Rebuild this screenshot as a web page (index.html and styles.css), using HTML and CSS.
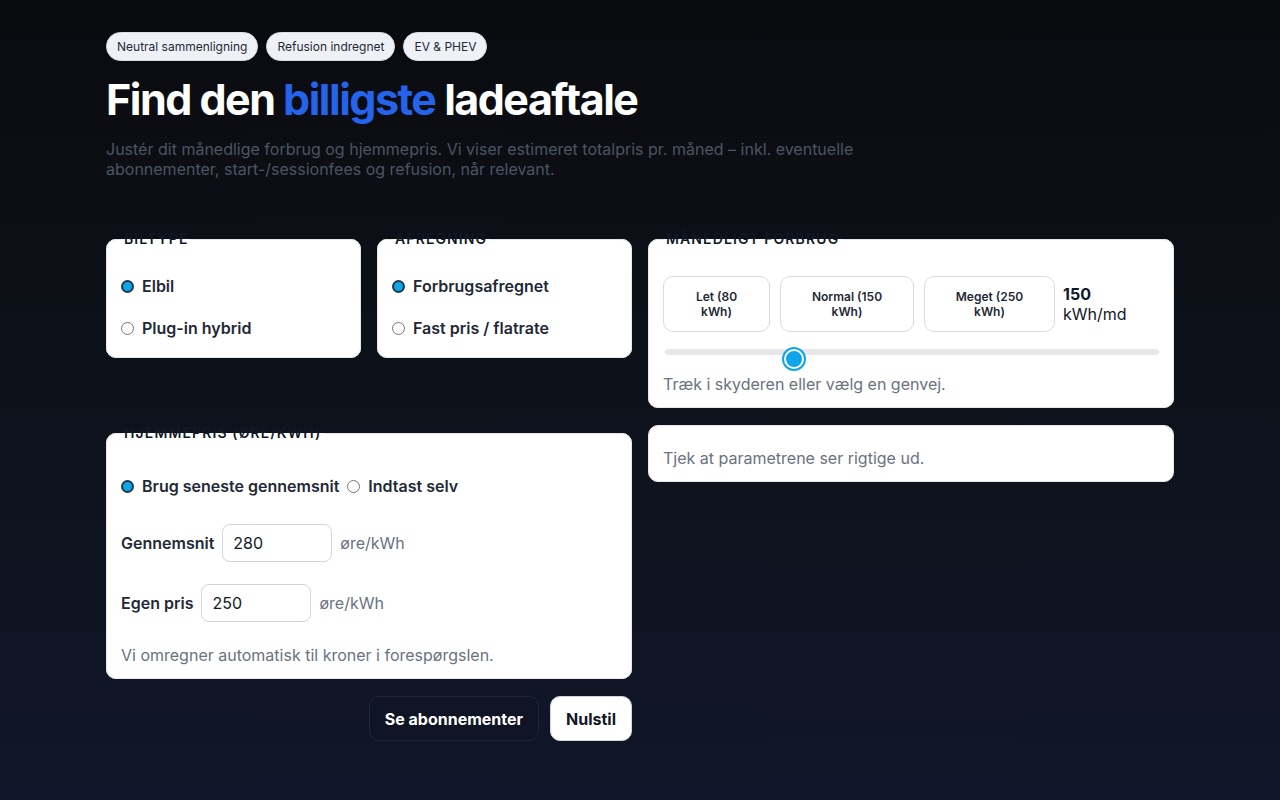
FILE: index.html
```html
<!DOCTYPE html>
<html lang="da">
<head>
<meta charset="utf-8">
<title>Find den billigste ladeaftale</title>
<link rel="stylesheet" href="styles.css">
</head>
<body>
<main class="page">
  <header class="hero">
    <div class="chips">
      <span class="chip">Neutral sammenligning</span>
      <span class="chip">Refusion indregnet</span>
      <span class="chip">EV &amp; PHEV</span>
    </div>
    <h1 class="title">Find den <span class="accent">billigste</span> ladeaftale</h1>
    <p class="lead">Justér dit månedlige forbrug og hjemmepris. Vi viser estimeret totalpris pr. måned – inkl. eventuelle abonnementer, start-/sessionfees og refusion, når relevant.</p>
  </header>

  <section class="grid">
    <div class="pair">
      <fieldset class="card card-choice">
        <legend>Biltype</legend>
        <label class="opt"><input type="radio" name="car" checked> Elbil</label>
        <label class="opt"><input type="radio" name="car"> Plug-in hybrid</label>
      </fieldset>
      <fieldset class="card card-choice">
        <legend>Afregning</legend>
        <label class="opt"><input type="radio" name="bill" checked> Forbrugsafregnet</label>
        <label class="opt"><input type="radio" name="bill"> Fast pris / flatrate</label>
      </fieldset>
    </div>

    <fieldset class="card card-usage">
      <legend>Månedligt forbrug</legend>
      <div class="presets">
        <button class="preset preset-let" type="button">Let (80 kWh)</button>
        <button class="preset preset-normal" type="button">Normal (150 kWh)</button>
        <button class="preset preset-meget" type="button">Meget (250 kWh)</button>
        <div class="value"><strong>150</strong><span>kWh/md</span></div>
      </div>
      <input class="slider" type="range" min="50" max="450" value="150">
      <p class="hint">Træk i skyderen eller vælg en genvej.</p>
    </fieldset>

    <fieldset class="card card-price">
      <legend>Hjemmepris (øre/kWh)</legend>
      <div class="inline-opts">
        <label class="opt"><input type="radio" name="price" checked> Brug seneste gennemsnit</label>
        <label class="opt"><input type="radio" name="price"> Indtast selv</label>
      </div>
      <div class="field field-avg">
        <span class="field-label">Gennemsnit</span>
        <input class="num" type="text" value="280">
        <span class="unit">øre/kWh</span>
      </div>
      <div class="field field-own">
        <span class="field-label">Egen pris</span>
        <input class="num" type="text" value="250">
        <span class="unit">øre/kWh</span>
      </div>
      <p class="hint">Vi omregner automatisk til kroner i forespørgslen.</p>
    </fieldset>

    <div class="card card-status">
      <p class="hint">Tjek at parametrene ser rigtige ud.</p>
    </div>

    <div class="actions">
      <button class="btn btn-dark" type="button">Se abonnementer</button>
      <button class="btn btn-light" type="button">Nulstil</button>
    </div>
  </section>
</main>
</body>
</html>
```

FILE: styles.css
```css
* { box-sizing: border-box; }

html, body {
  margin: 0;
  min-height: 100%;
}

body {
  font-family: Inter, "Noto Sans", sans-serif;
  background: linear-gradient(180deg, #0a0b0f 0%, #0d1119 45%, #10172a 100%);
  min-height: 800px;
  color: #111827;
}

.page {
  max-width: 1100px;
  margin: 0 auto;
  padding: 32px 16px 40px;
}

.chips {
  display: flex;
  gap: 8px;
}

.chip {
  display: inline-flex;
  align-items: center;
  height: 29px;
  padding: 0 10px;
  border-radius: 999px;
  background: #eef1f6;
  border: 1px solid #d9dee7;
  color: #1f2937;
  font-size: 12px;
  line-height: 1;
}

.title {
  margin: 11px 0 0;
  font-size: 43px;
  line-height: 54px;
  font-weight: 700;
  letter-spacing: -0.035em;
  color: #ffffff;
}

.accent { color: #2563eb; }

.lead {
  margin: 13px 0 0;
  max-width: 768px;
  font-size: 16px;
  line-height: 20px;
  color: #4b5563;
}

.grid {
  margin-top: 52px;
  display: grid;
  grid-template-columns: 1fr 1fr;
  column-gap: 16px;
  row-gap: 17px;
  align-items: start;
}

.pair {
  display: grid;
  grid-template-columns: 1fr 1fr;
  gap: 16px;
  align-items: start;
}

.card {
  margin: 0;
  min-width: 0;
  background: #ffffff;
  border: 1px solid #e5e7eb;
  border-radius: 10px;
}

fieldset.card legend {
  padding: 0 2px;
  margin-left: 1px;
  font-size: 14px;
  line-height: 16px;
  font-weight: 600;
  text-transform: uppercase;
  letter-spacing: 0.08em;
  color: #111827;
}

.card-choice {
  padding: 27px 14px 17px;
  display: flex;
  flex-direction: column;
  gap: 18px;
}

.opt {
  display: flex;
  align-items: center;
  gap: 8px;
  height: 24px;
  font-size: 16px;
  font-weight: 600;
  color: #1f2937;
  white-space: nowrap;
}

.opt input {
  -webkit-appearance: none;
  appearance: none;
  margin: 0;
  width: 13px;
  height: 13px;
  border-radius: 50%;
  border: 1px solid #767676;
  background: #ffffff;
  flex: none;
}

.opt input:checked {
  background: #0ea5e9;
  border: 2px solid #1e3a4c;
}

.card-usage {
  padding: 29px 14px 11px;
}

.presets {
  display: flex;
  align-items: center;
  gap: 10px;
}

.preset {
  height: 56px;
  padding: 0 26px;
  background: #ffffff;
  border: 1px solid #d9dce1;
  border-radius: 10px;
  font-family: inherit;
  font-size: 12px;
  line-height: 15px;
  font-weight: 600;
  color: #1f2937;
  text-align: center;
}

.preset-let { width: 107px; }
.preset-normal { width: 134px; }
.preset-meget { width: 131px; }

.value {
  display: flex;
  flex-direction: column;
  font-size: 16px;
  line-height: 20px;
  color: #111827;
  margin-left: -2px;
}

.value strong { font-weight: 700; }

.slider {
  -webkit-appearance: none;
  appearance: none;
  display: block;
  width: calc(100% - 2px);
  height: 6px;
  margin: 17px 0 0 2px;
  border-radius: 999px;
  background: #e5e7eb;
  outline: none;
}

.slider::-webkit-slider-runnable-track {
  height: 6px;
  border-radius: 999px;
  background: transparent;
}

.slider::-webkit-slider-thumb {
  -webkit-appearance: none;
  appearance: none;
  width: 20px;
  height: 20px;
  border-radius: 50%;
  background: #0ea5e9;
  border: 2px solid #ffffff;
  box-shadow: 0 0 0 2px #0ea5e9;
}

.hint {
  margin: 17px 0 0;
  font-size: 16px;
  line-height: 24px;
  color: #6b7280;
}

.card-status {
  padding: 20px 14px 11px;
}

.card-status .hint { margin: 0; }

.card-price {
  padding: 33px 14px 11px;
}

.inline-opts {
  display: flex;
  gap: 8px;
}

.field {
  display: flex;
  align-items: center;
  gap: 8px;
}

.field-avg { margin-top: 26px; }
.field-own { margin-top: 22px; }

.field-label {
  font-size: 16px;
  font-weight: 600;
  color: #1f2937;
}

.num {
  width: 110px;
  height: 38px;
  padding: 0 10px;
  border: 1px solid #d1d5db;
  border-radius: 8px;
  font-family: inherit;
  font-size: 16px;
  color: #111827;
  background: #ffffff;
}

.unit {
  font-size: 16px;
  color: #6b7280;
}

.card-price .hint { margin-top: 21px; }

.actions {
  grid-column: 1;
  display: flex;
  justify-content: flex-end;
  gap: 11px;
}

.btn {
  height: 45px;
  padding: 0 15px;
  border-radius: 10px;
  font-family: inherit;
  font-size: 16px;
  font-weight: 700;
}

.btn-dark {
  background: #0f1524;
  color: #ffffff;
  border: 1px solid #1f2737;
}

.btn-light {
  background: #ffffff;
  color: #111827;
  border: 1px solid #d1d5db;
}
```
